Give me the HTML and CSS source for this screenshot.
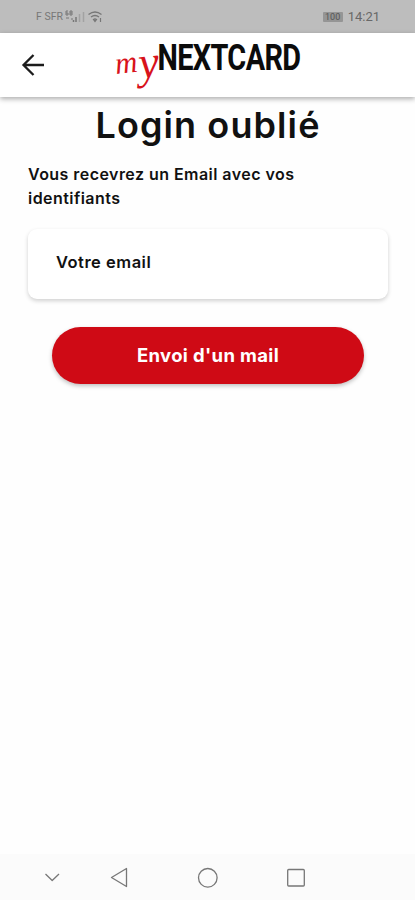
FILE: index.html
```html
<!DOCTYPE html>
<html lang="fr">
<head>
<meta charset="utf-8">
<title>Login oublié</title>
<link rel="stylesheet" href="styles.css">
</head>
<body>
<div class="status">
  <div class="network">
    <span class="carrier">F SFR</span>
    <svg width="42" height="16" viewBox="0 0 42 16" fill="none" stroke="#777">
      <path d="M5 2H3v4h2V4H3M7 2h2v4H7zM7 4h2M3 9h3M8 10h2" stroke-width="1"/>
      <path d="M10.500 11v2M13 8v5" stroke-width="1.500"/>
      <path d="M16.500 5v8M20.500 3v10" stroke="#a2a2a2" stroke-width="1.500"/>
      <path d="M25.500 5.500Q32 .5 38.500 5.500M28 8q4-3 8 0M30.500 10.500q1.500-1 3 0L32 12.500z" stroke-width="1.300"/>
      <path d="M37.500 9v4" stroke-width="1.200"/>
    </svg>
  </div>
  <div class="clock">
    <span class="battery">100</span>
    <span class="time">14:21</span>
  </div>
</div>
<header class="bar">
  <svg class="back" width="24" height="24" viewBox="0 0 24 24" fill="none" stroke="#1c1c1c" stroke-width="2.300">
    <path d="M23 12H2.500M12.500 2L2.500 12l10 10"/>
  </svg>
  <svg class="logo" width="190" height="56" viewBox="0 0 190 56">
    <text class="logo-my" x="0" y="37" transform="rotate(-6 0 37)">m<tspan class="logo-y" dy="7" dx="1">y</tspan></text>
    <text class="logo-name" x="53.200" y="32.500" textLength="184" lengthAdjust="spacing" transform="scale(.78 1)">NEXTCARD</text>
  </svg>
</header>
<main class="content">
  <h1>Login oublié</h1>
  <p>Vous recevrez un Email avec vos<br>identifiants</p>
  <div class="field">Votre email</div>
  <button class="send">Envoi d'un mail</button>
</main>
<nav class="nav">
  <svg width="415" height="46" viewBox="0 0 415 46" fill="none" stroke="#777" stroke-width="1.300" stroke-linejoin="round">
    <path d="M45.500 20l6.700 6.500L59 20"/>
    <path d="M126.500 14.500v18L111.500 23.500z"/>
    <circle cx="207.800" cy="23.800" r="9.300"/>
    <rect x="287.700" y="15.500" width="16.600" height="16.500" rx="1"/>
  </svg>
</nav>
</body>
</html>
```
FILE: styles.css
```css
* { box-sizing: border-box; }
body {
  margin: 0;
  height: 900px;
  display: flex;
  flex-direction: column;
  background: #fefefe;
  color: #111;
  font-family: Inter, "Liberation Sans", sans-serif;
  overflow: hidden;
}
.status {
  height: 33px;
  flex: none;
  display: flex;
  justify-content: space-between;
  align-items: center;
  padding: 0 35px 0 36px;
  background: #bdbdbd;
  color: #777;
  font-family: Roboto, sans-serif;
}
.network, .clock { display: flex; align-items: center; }
.carrier { font-size: 10.500px; width: 27px; white-space: nowrap; }
.battery {
  width: 20px;
  height: 10px;
  margin-right: 5px;
  background: #959595;
  color: #555;
  font-size: 9px;
  line-height: 10px;
  text-align: center;
  border-radius: 1px;
}
.time { font-size: 13px; line-height: 16px; color: #686868; }
.bar {
  height: 64px;
  flex: none;
  display: flex;
  align-items: center;
  padding-left: 21px;
  background: #fff;
  box-shadow: 0 2px 5px rgba(0, 0, 0, .32);
}
.logo { margin-left: 71px; overflow: visible; }
.logo-my {
  font: italic 31px "Liberation Serif", serif;
  fill: #d8121b;
}
.logo-y { font-size: 46px; }
.logo-name {
  font: 700 37px Roboto, sans-serif;
  fill: #0b0b0b;
}
.content {
  flex: 1;
  display: flex;
  flex-direction: column;
  padding: 0 27px 0 28px;
}
h1 {
  margin: 3px 0 0;
  font-size: 36px;
  line-height: 50px;
  font-weight: 600;
  letter-spacing: 1.100px;
  text-align: center;
  white-space: nowrap;
}
p {
  margin: 12px 0 0;
  font-size: 16px;
  line-height: 24px;
  font-weight: 600;
  letter-spacing: .45px;
  white-space: nowrap;
}
.field {
  height: 70px;
  margin-top: 19px;
  padding: 0 28px 5px;
  display: flex;
  align-items: center;
  border-radius: 9px;
  background: #fff;
  box-shadow: 0 2px 4px rgba(0, 0, 0, .18);
  font-size: 16.500px;
  font-weight: 600;
  letter-spacing: .5px;
}
.send {
  height: 57px;
  margin: 28px 24px 0;
  padding: 0 0 2px;
  border: 0;
  border-radius: 29px;
  background: #cf0a15;
  color: #fff;
  box-shadow: 0 2px 4px rgba(0, 0, 0, .25);
  font: 700 18.500px Inter, sans-serif;
  letter-spacing: .35px;
}
.nav { height: 46px; flex: none; background: #fbfbfb; }
.nav svg { display: block; }
```
